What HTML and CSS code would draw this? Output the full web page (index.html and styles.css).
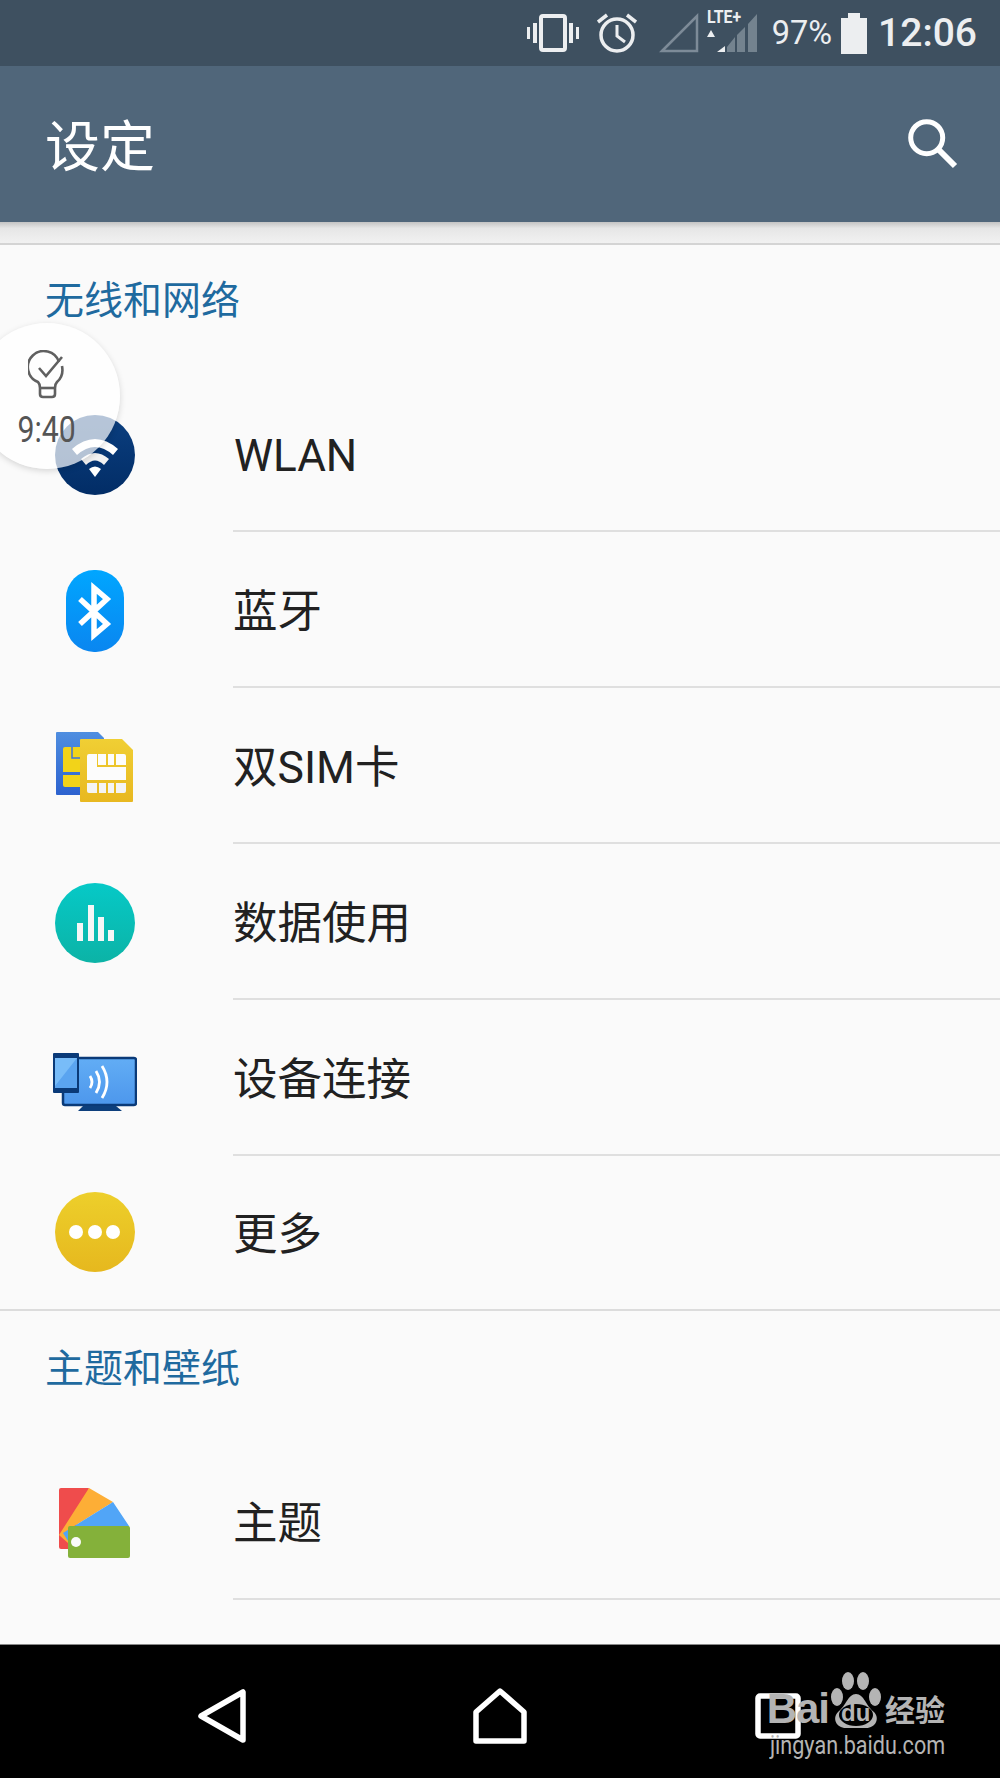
FILE: index.html
```html
<!DOCTYPE html>
<html lang="zh-CN">
  <head>
    <meta charset="UTF-8" />
    <meta name="viewport" content="width=device-width, initial-scale=1.0" />
    <title>设定</title>
    <link rel="stylesheet" href="styles.css">
  </head>
  <body>
    <div class="phone">
      <div class="statusbar">
        <svg class="st-vibrate" width="52" height="38" viewBox="0 0 52 38">
          <rect x="14" y="2" width="24" height="34" rx="2" fill="none" stroke="#eceef0" stroke-width="4"/>
          <path d="M6 9h4v20H6zM0 13h3v12H0zM42 9h4v20h-4zM49 13h3v12h-3z" fill="#eceef0"/>
        </svg>
        <svg class="st-alarm" width="40" height="40" viewBox="0 0 40 40">
          <circle cx="20" cy="22" r="16" fill="none" stroke="#eceef0" stroke-width="3.5"/>
          <path d="M20 12v11l8 6" fill="none" stroke="#eceef0" stroke-width="3"/>
          <path d="M1 9 10 2M39 9 30 2" fill="none" stroke="#eceef0" stroke-width="3.5"/>
        </svg>
        <svg class="st-sim1" width="40" height="40" viewBox="0 0 40 40">
          <path d="M3 38 38 3v35z" fill="none" stroke="#7d8b98" stroke-width="2.5"/>
        </svg>
        <div class="st-lte">
          <svg width="54" height="42" viewBox="0 0 54 42">
            <path d="M6 20l4 7H2zM12 42l8-6v6z" fill="#eceef0"/>
            <path d="M22 42V37L30 27V42zM32 42V25L40 17V42zM43 42V14L52 4V42z" fill="#74838f"/>
          </svg>
          <span class="st-lte-label">LTE+</span>
        </div>
        <span class="st-pct">97%</span>
        <svg class="st-battery" width="26" height="41" viewBox="0 0 26 41">
          <path d="M0 5h7V0h12v5h7v36H0z" fill="#eceef0"/>
        </svg>
        <span class="st-time">12:06</span>
      </div>

      <div class="appbar">
        <h1 class="appbar-title">设定</h1>
        <svg width="50" height="50" viewBox="0 0 50 50">
          <circle cx="18.7" cy="18.7" r="16" fill="none" stroke="#fff" stroke-width="5"/>
          <path d="M30 30 47 47" stroke="#fff" stroke-width="6"/>
        </svg>
      </div>
      <div class="appbar-shadow"></div>

      <main class="list">
        <section class="group">
          <h2 class="group-title">无线和网络</h2>
          <div class="row">
            <div class="row-icon">
              <svg width="80" height="80" viewBox="0 0 80 80">
                <defs>
                  <linearGradient id="wifiBg" x1="0" y1="0" x2="0" y2="1">
                    <stop offset="0" stop-color="#0b3f80"/><stop offset="1" stop-color="#022d66"/>
                  </linearGradient>
                </defs>
                <circle cx="40" cy="40" r="40" fill="url(#wifiBg)"/>
                <path d="M17 34Q40 14 63 34l-5 6Q40 24 22 40z" fill="#fff"/>
                <path d="M26 44Q40 32 54 44l-5 6Q40 41 31 50z" fill="#f2f2f2"/>
                <path d="M34 54Q40 49 46 54l-6 8z" fill="#fff"/>
              </svg>
            </div>
            <div class="row-label row-label-latin">WLAN</div>
          </div>
          <div class="row">
            <div class="row-icon">
              <svg width="58" height="82" viewBox="0 0 58 82">
                <defs>
                  <linearGradient id="btBg" x1="0" y1="0" x2="0" y2="1">
                    <stop offset="0" stop-color="#00a6ff"/><stop offset="1" stop-color="#0a86f0"/>
                  </linearGradient>
                </defs>
                <rect width="58" height="82" rx="28" fill="url(#btBg)"/>
                <path d="M14 29 41 54 28 65V18L41 29 14 54" fill="none" stroke="#fff" stroke-width="5.5"/>
              </svg>
            </div>
            <div class="row-label">蓝牙</div>
          </div>
          <div class="row">
            <div class="row-icon">
              <svg width="78" height="72" viewBox="0 0 78 72">
                <defs>
                  <linearGradient id="simBlue" x1="0" y1="0" x2="0" y2="1">
                    <stop offset="0" stop-color="#4f8ee0"/><stop offset="1" stop-color="#2c62cf"/>
                  </linearGradient>
                  <linearGradient id="simYellow" x1="0" y1="0" x2="0" y2="1">
                    <stop offset="0" stop-color="#f0cf34"/><stop offset="1" stop-color="#e8b820"/>
                  </linearGradient>
                </defs>
                <path d="M0 2Q0 1 1 1H42L48 7V64H1Q0 64 0 63z" fill="url(#simBlue)"/>
                <path d="M7 18Q7 16 9 16H24V41H7zM7 44H24V56H9Q7 56 7 54z" fill="#f2d319"/>
                <path d="M16 16V27H24" fill="none" stroke="#3f74d6" stroke-width="1.5"/>
                <path d="M24 9Q24 8 25 8H66L77 19V70Q77 71 76 71H25Q24 71 24 70z" fill="url(#simYellow)"/>
                <path d="M31 25Q31 23 33 23H41V36H70V49H31z" fill="#fcfcfc"/>
                <path d="M42 23H50V34H42zM52 23H58V34H52zM60 23H68Q70 23 70 25V34H60z" fill="#fcfcfc"/>
                <path d="M31 52H41V62H33Q31 62 31 60zM43 52H50V62H43zM52 52H58V62H52zM60 52H70V60Q70 62 68 62H60z" fill="#f4f4f4"/>
              </svg>
            </div>
            <div class="row-label">双SIM卡</div>
          </div>
          <div class="row">
            <div class="row-icon">
              <svg width="80" height="80" viewBox="0 0 80 80">
                <defs>
                  <linearGradient id="dataBg" x1="0" y1="0" x2="0" y2="1">
                    <stop offset="0" stop-color="#06c9c7"/><stop offset="1" stop-color="#0cb3a6"/>
                  </linearGradient>
                </defs>
                <circle cx="40" cy="40" r="40" fill="url(#dataBg)"/>
                <path d="M22 40H28V58H22zM33 22H39V58H33zM43 34H49V58H43zM53 47H59V58H53z" fill="#f6f6f6"/>
              </svg>
            </div>
            <div class="row-label">数据使用</div>
          </div>
          <div class="row">
            <div class="row-icon">
              <svg class="icon-device" width="84" height="58" viewBox="0 0 84 58">
                <defs>
                  <linearGradient id="devBg" x1="0" y1="0" x2="0" y2="1">
                    <stop offset="0" stop-color="#62adf5"/><stop offset="1" stop-color="#4d97ec"/>
                  </linearGradient>
                </defs>
                <rect x="10" y="5" width="73" height="47" rx="2" fill="url(#devBg)" stroke="#0a3a78" stroke-width="2.5"/>
                <path d="M25 58 30 53H63L69 58z" fill="#0d3f7c"/>
                <rect x="0" y="0" width="26" height="40" rx="1" fill="#0a3a78"/>
                <rect x="2" y="5" width="22" height="30" fill="#5aa4f0"/>
                <path d="M2 5H24L2 33z" fill="#78bcf8"/>
                <path d="M37 23Q41 29 37 35M43 18Q50 29 43 40M49 13Q59 29 49 45" fill="none" stroke="#fff" stroke-width="2.8"/>
              </svg>
            </div>
            <div class="row-label">设备连接</div>
          </div>
          <div class="row row-last">
            <div class="row-icon">
              <svg width="80" height="80" viewBox="0 0 80 80">
                <defs>
                  <linearGradient id="moreBg" x1="0" y1="0" x2="0" y2="1">
                    <stop offset="0" stop-color="#edcf2b"/><stop offset="1" stop-color="#e6b81e"/>
                  </linearGradient>
                </defs>
                <circle cx="40" cy="40" r="40" fill="url(#moreBg)"/>
                <circle cx="21" cy="40" r="7" fill="#fff"/>
                <circle cx="40" cy="40" r="7" fill="#fff"/>
                <circle cx="58" cy="40" r="7" fill="#fff"/>
              </svg>
            </div>
            <div class="row-label">更多</div>
          </div>
        </section>

        <section class="group">
          <h2 class="group-title">主题和壁纸</h2>
          <div class="row">
            <div class="row-icon">
              <svg class="icon-theme" width="72" height="72" viewBox="0 0 72 72">
                <path d="M2 0H30L9 61H2Q0 61 0 59V2Q0 0 2 0z" fill="#ef4c4c"/>
                <path d="M30 0 54 14 9 42V55L0 47z" fill="#fdae36"/>
                <path d="M54 14 70 38V42H9V53L4 45z" fill="#51a5f7"/>
                <path d="M11 38H69Q71 38 71 40V68Q71 70 69 70H11Q9 70 9 68V40Q9 38 11 38z" fill="#84b13a"/>
                <circle cx="17" cy="54" r="5" fill="#fafafa"/>
              </svg>
            </div>
            <div class="row-label">主题</div>
          </div>
        </section>
      </main>

      <nav class="navbar">
        <svg width="48" height="54" viewBox="0 0 48 54">
          <path d="M3 27 45 3V51z" fill="none" stroke="#fff" stroke-width="5.5" stroke-linejoin="round"/>
        </svg>
        <svg width="54" height="56" viewBox="0 0 54 56">
          <path d="M3 53V24L27 3 51 24V53z" fill="none" stroke="#fff" stroke-width="5.5" stroke-linejoin="round"/>
        </svg>
        <svg width="46" height="46" viewBox="0 0 46 46">
          <rect x="3" y="3" width="40" height="40" rx="2" fill="none" stroke="#fff" stroke-width="5.5"/>
        </svg>
      </nav>

      <!-- floating tip bubble, sits over the wlan row -->
      <div class="tip">
        <svg width="38" height="50" viewBox="0 0 38 50">
          <path d="M31 12A16 16 0 1 0 10 32Q12 34 12 38V44Q12 47 15 47H24Q27 47 27 44V38Q27 34 29 32Q36 26 34 16" fill="none" stroke="#606060" stroke-width="2.6"/>
          <path d="M12 38H27" stroke="#606060" stroke-width="2.6"/>
          <path d="M11 18 18 26 34 7" fill="none" stroke="#606060" stroke-width="2.6"/>
        </svg>
        <span class="tip-time">9:40</span>
      </div>

      <!-- baidu watermark -->
      <div class="watermark">
        <div class="wm-top">
          <span class="wm-bai">Bai</span>
          <div class="wm-paw">
            <svg width="52" height="56" viewBox="0 0 52 56">
              <ellipse cx="7" cy="25" rx="6" ry="9" fill="#b4b4b4"/>
              <ellipse cx="18" cy="9" rx="6" ry="9" fill="#b4b4b4"/>
              <ellipse cx="33" cy="9" rx="6" ry="9" fill="#b4b4b4"/>
              <ellipse cx="45" cy="25" rx="6" ry="9" fill="#b4b4b4"/>
              <path d="M26 22C34 22 36 34 44 40 50 46 46 56 36 56H16C6 56 2 46 8 40 16 34 18 22 26 22z" fill="#b4b4b4"/>
              <ellipse cx="26" cy="43" rx="17" ry="11" fill="#000"/>
            </svg>
            <span class="wm-du">du</span>
          </div>
          <span class="wm-jy">经验</span>
        </div>
        <span class="wm-url">jingyan.baidu.com</span>
      </div>
    </div>
  </body>
</html>
```

FILE: styles.css
```css
* {
  box-sizing: border-box;
}

body {
  margin: 0;
  background-color: #fafafa;
  font-family: Roboto, "Noto Sans CJK SC", sans-serif;
}

.phone {
  position: relative;
  display: flex;
  flex-direction: column;
  width: 1000px;
  height: 1778px;
  overflow: hidden;
}

/* status bar */
.statusbar {
  display: flex;
  align-items: center;
  flex: none;
  height: 66px;
  padding-right: 23px;
  justify-content: flex-end;
  background-color: #3e5060;
  color: #eceef0;
}

.st-vibrate {
  margin-right: 18px;
}

.st-alarm {
  margin-right: 22px;
}

.st-lte {
  position: relative;
  width: 54px;
  height: 42px;
  margin: 0 13px 14px 6px;
  align-self: flex-end;
}

.st-lte svg {
  display: block;
}

.st-lte-label {
  position: absolute;
  left: 2px;
  top: -2px;
  font-size: 18px;
  line-height: 18px;
  font-weight: 700;
  transform: scaleX(0.88);
  transform-origin: left;
}

.st-pct {
  margin-right: 9px;
  font-size: 32.5px;
}

.st-battery {
  margin-right: 11px;
}

.st-time {
  font-size: 39px;
  font-weight: 500;
}

/* app bar */
.appbar {
  display: flex;
  align-items: center;
  justify-content: space-between;
  flex: none;
  height: 156px;
  padding: 0 42px 0 45px;
  background-color: #50667a;
}

.appbar-title {
  margin: 0 0 4px;
  font-size: 55px;
  font-weight: 400;
  color: #fff;
}

.appbar-shadow {
  flex: none;
  height: 23px;
  background: linear-gradient(#c4c4c4, #e6e6e6 30%, #f1f1f1);
  border-bottom: 2px solid #d4d4d4;
}

/* list */
.list {
  flex: 1;
  overflow: hidden;
  background-color: #fafafa;
}

.group {
  border-bottom: 2px solid #dcdcdc;
}

.group:last-child {
  border-bottom: none;
}

.group-title {
  height: 131px;
  margin: 0;
  padding: 29px 0 0 45px;
  font-size: 39px;
  line-height: 54px;
  font-weight: 400;
  color: #1f6a9f;
}

.group + .group .group-title {
  height: 133px;
  padding-top: 31px;
}

.row {
  display: flex;
  height: 156px;
}

.row-last {
  height: 153px;
}

.row-icon {
  display: flex;
  align-items: center;
  justify-content: center;
  flex: none;
  width: 190px;
  margin-right: 43px;
  padding-top: 2px;
}

.row-last .row-icon {
  padding: 0 0 1px;
}

.icon-device {
  margin-top: 6px;
}

.icon-theme {
  margin-top: 1px;
}

.row-label {
  display: flex;
  align-items: center;
  flex: 1;
  padding-bottom: 4px;
  font-size: 44.5px;
  color: #212121;
  border-bottom: 2px solid #dfdfdf;
}

.row-label-latin {
  padding: 6px 0 0 1px;
  font-size: 44px;
}

.row-last .row-label {
  border-bottom: none;
}

/* nav bar */
.navbar {
  display: grid;
  grid-template-columns: repeat(3, 278px);
  justify-content: center;
  justify-items: center;
  align-items: center;
  flex: none;
  height: 134px;
  padding-top: 8px;
  background-color: #000;
  border-top: 1px solid #888;
}

/* tip bubble */
.tip {
  position: absolute;
  left: -26px;
  top: 323px;
  display: flex;
  flex-direction: column;
  align-items: center;
  width: 146px;
  height: 146px;
  padding-top: 27px;
  border-radius: 50%;
  background-color: rgba(255, 255, 255, 0.7);
  box-shadow: 0 2px 6px rgba(0, 0, 0, 0.15);
  color: #555;
}

.tip-time {
  margin-top: 9px;
  font-size: 36px;
  line-height: 42px;
  transform: scaleX(0.84);
}

/* watermark */
.watermark {
  position: absolute;
  left: 760px;
  top: 1672px;
  display: flex;
  flex-direction: column;
  align-items: flex-end;
  width: 185px;
  color: #b4b4b4;
}

.wm-top {
  display: flex;
  align-items: flex-end;
  height: 56px;
}

.wm-bai {
  font-family: "Liberation Sans", sans-serif;
  font-size: 42px;
  line-height: 38px;
  font-weight: 700;
  letter-spacing: -1px;
}

.wm-paw {
  position: relative;
  width: 52px;
  height: 56px;
  margin: 0 3px 0 1px;
}

.wm-paw svg {
  display: block;
}

.wm-du {
  position: absolute;
  left: 11px;
  bottom: 3px;
  font-family: "Liberation Sans", sans-serif;
  font-size: 24px;
  line-height: 24px;
  font-weight: 700;
}

.wm-jy {
  font-size: 30px;
  line-height: 34px;
  font-weight: 700;
}

.wm-url {
  margin-top: 3px;
  font-size: 26px;
  line-height: 28px;
  transform: scaleX(0.83);
  transform-origin: right;
}
```
